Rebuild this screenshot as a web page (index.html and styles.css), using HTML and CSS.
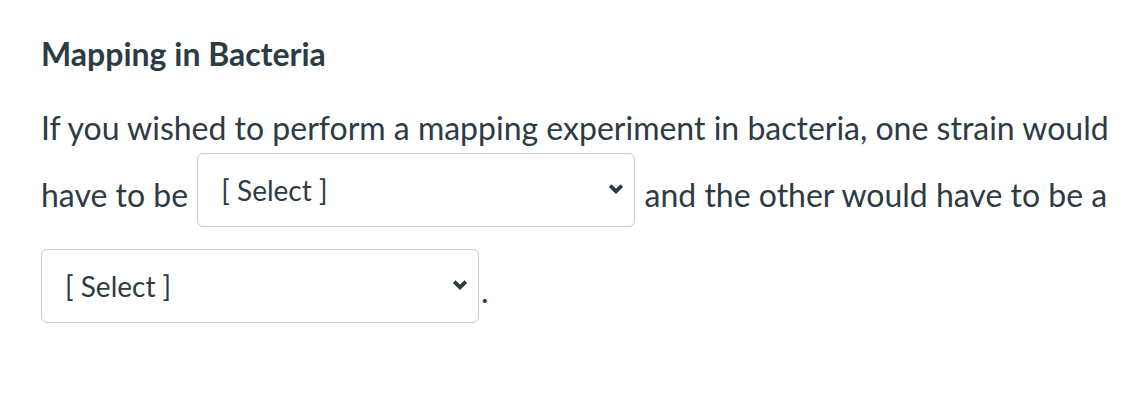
FILE: index.html
```html
<!DOCTYPE html>
<html lang="en">
<head>
<meta charset="utf-8">
<link rel="stylesheet" href="styles.css">
</head>
<body>
<div class="question">
  <h2 class="title">Mapping in Bacteria</h2>
  <p class="text">If you wished to perform a mapping experiment in bacteria, one strain would have to be <span class="select-wrap"><select class="select"><option>[ Select ]</option></select><svg class="chev" viewBox="0 0 16 12" width="16" height="12"><path d="M2.2 2.6 L8 8.4 L13.8 2.6" fill="none" stroke="#2d3b45" stroke-width="3.8"/></svg></span> and the other would have to be a <span class="select-wrap"><select class="select"><option>[ Select ]</option></select><svg class="chev" viewBox="0 0 16 12" width="16" height="12"><path d="M2.2 2.6 L8 8.4 L13.8 2.6" fill="none" stroke="#2d3b45" stroke-width="3.8"/></svg></span>.</p>
</div>
</body>
</html>
```
FILE: styles.css
```css
html, body {
  margin: 0;
  padding: 0;
  background: #ffffff;
}
body {
  font-family: Lato, "Open Sans", sans-serif;
  color: #2d3b45;
}
.question {
  padding: 34px 0 0 41px;
  width: 1085px;
}
.title {
  margin: 0;
  font-size: 32px;
  font-weight: 700;
  line-height: 40px;
}
.text {
  margin: 29px 0 0 0;
  font-size: 32px;
  line-height: 50px;
}
.select-wrap {
  position: relative;
  display: inline-block;
  overflow: hidden;
  vertical-align: -42px;
  margin: 0 1px 22px 1px;
}
.text .select-wrap:last-child {
  margin-left: 0;
  margin-right: 2px;
}
.select {
  appearance: none;
  -webkit-appearance: none;
  width: 438px;
  height: 74px;
  border: 1px solid #c7cdd1;
  border-radius: 6px;
  background: #ffffff;
  font-family: Lato, "Open Sans", sans-serif;
  font-size: 28px;
  color: #2d3b45;
  padding: 0 0 0 23px;
  margin: 0;
  display: block;
}
.chev {
  position: absolute;
  right: 11px;
  top: 30px;
}
```
